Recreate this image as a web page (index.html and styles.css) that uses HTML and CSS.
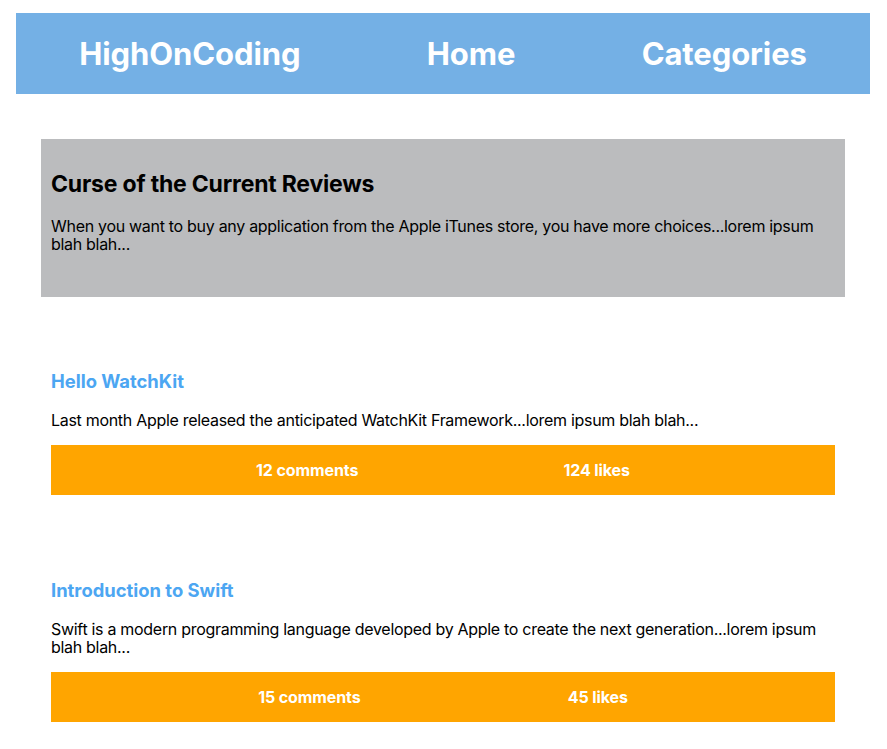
FILE: index.html
```html
<!DOCTYPE html>
<html lang="en">
<head>
<meta charset="utf-8">
<title>HighOnCoding</title>
<link rel="stylesheet" href="styles.css">
</head>
<body>
<div class="site">
  <header class="topbar">
    <span class="nav-item">HighOnCoding</span>
    <span class="nav-item">Home</span>
    <span class="nav-item">Categories</span>
  </header>
  <main class="content">
    <section class="feature">
      <h2 class="feature-title">Curse of the Current Reviews</h2>
      <p class="text">When you want to buy any application from the Apple iTunes store, you have more choices...lorem ipsum blah blah...</p>
    </section>
    <article class="post post-first">
      <h3 class="post-title">Hello WatchKit</h3>
      <p class="text">Last month Apple released the anticipated WatchKit Framework...lorem ipsum blah blah...</p>
      <div class="stats">
        <span class="stat">12 comments</span>
        <span class="stat">124 likes</span>
      </div>
    </article>
    <article class="post">
      <h3 class="post-title">Introduction to Swift</h3>
      <p class="text">Swift is a modern programming language developed by Apple to create the next generation...lorem ipsum blah blah...</p>
      <div class="stats">
        <span class="stat">15 comments</span>
        <span class="stat">45 likes</span>
      </div>
    </article>
  </main>
</div>
</body>
</html>
```

FILE: styles.css
```css
* { box-sizing: border-box; }
html, body { margin: 0; padding: 0; background: #ffffff; }
body {
  font-family: Inter, "Noto Sans", "Liberation Sans", sans-serif;
  color: #000;
}
.site {
  margin: 13px 17px 0 16px;
}
.topbar {
  height: 81px;
  background: #74b0e5;
  display: flex;
  justify-content: space-around;
  align-items: center;
}
.nav-item {
  color: #fff;
  font-weight: 700;
  font-size: 31px;
  line-height: 1;
  letter-spacing: -0.1px;
}
.content {
  padding: 45px 25px 0;
}
.feature {
  background: #bbbcbe;
  padding: 10px;
  height: 158px;
}
.feature-title {
  margin: 22px 0 0;
  font-size: 23px;
  font-weight: 700;
  line-height: 27px;
  letter-spacing: -0.2px;
}
.text {
  margin: 19px 0 0;
  font-size: 16px;
  line-height: 18px;
  letter-spacing: -0.3px;
}
.post {
  padding: 0 10px;
  margin-top: 84px;
}
.post-first {
  margin-top: 73px;
}
.post-title {
  margin: 0;
  font-size: 18.4px;
  font-weight: 700;
  line-height: 22px;
  color: #4ca6f2;
}
.post .text {
  margin-top: 19px;
}
.stats {
  margin-top: 16px;
  height: 50px;
  background: #ffa500;
  display: flex;
  justify-content: space-evenly;
  align-items: center;
}
.stat {
  color: #fff;
  font-weight: 700;
  font-size: 16px;
  letter-spacing: -0.1px;
}
```
